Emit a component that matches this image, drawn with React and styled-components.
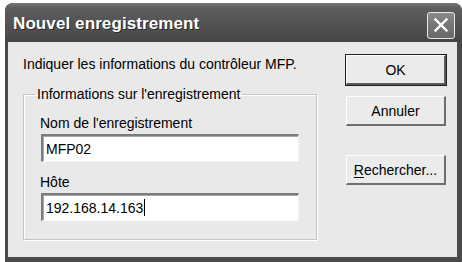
import React from 'react';
import styled, { createGlobalStyle } from 'styled-components';

const GlobalStyle = createGlobalStyle`
  html, body {
    margin: 0;
    padding: 0;
    background: #ffffff;
  }
  body {
    font-family: "Liberation Sans", Arial, sans-serif;
    font-size: 14px;
    color: #000;
  }
`;

const Window = styled.div`
  margin: 3px 0 0 5px;
  width: 457px;
  height: 259px;
  display: flex;
  flex-direction: column;
  background: #4a4a4a;
  border-radius: 8px 8px 0 0;
  overflow: hidden;
`;

const TitleBar = styled.div`
  height: 39px;
  flex-shrink: 0;
  display: flex;
  align-items: center;
  justify-content: space-between;
  padding: 2px 7px 0 8px;
  box-sizing: border-box;
  background: linear-gradient(180deg, #7a7a7a 0%, #5e5e5e 12%, #555555 45%, #4c4c4c 80%, #444444 100%);
`;

const Title = styled.span`
  font-family: "Liberation Sans", Arial, sans-serif;
  font-weight: bold;
  font-size: 17px;
  color: #ffffff;
  text-shadow: 1px 1px 0 #2a2a2a;
  letter-spacing: 0.1px;
`;

const CloseButton = styled.div`
  width: 28px;
  height: 27px;
  box-sizing: border-box;
  border: 1px solid #e8e8e8;
  border-radius: 3px;
  background: linear-gradient(180deg, #8a8a8a 0%, #757575 50%, #6a6a6a 100%);
  display: flex;
  align-items: center;
  justify-content: center;
  margin-top: 3px;
`;

const Body = styled.div`
  flex: 1;
  margin: 0 5px 5px 3px;
  background: #e9e9e9;
  display: flex;
  gap: 29px;
  padding: 13px 11px 0 15px;
`;

const MainColumn = styled.div`
  width: 294px;
  display: flex;
  flex-direction: column;
`;

const Message = styled.div`
  line-height: 16px;
  margin-top: 1px;
`;

const Group = styled.fieldset`
  margin: 14px 0 0 0;
  padding: 13px 16px 18px 17px;
  border: 1px solid #c4c4c4;
  box-shadow: inset 1px 1px 0 #ffffff, 1px 1px 0 #ffffff;
  min-width: 0;
`;

const Legend = styled.legend`
  margin-left: -6px;
  padding: 0 2px;
  line-height: 16px;
`;

const FieldLabel = styled.div`
  line-height: 16px;
  margin-left: -1px;
  margin-top: ${({ $first }) => ($first ? '0' : '12px')};
`;

const TextField = styled.div`
  margin-top: 3px;
  width: 258px;
  height: 28px;
  box-sizing: border-box;
  background: #ffffff;
  border-style: solid;
  border-width: 2px 1px 1px 2px;
  border-color: #7c7c7c #f4f4f4 #f4f4f4 #7c7c7c;
  box-shadow: inset 1px 1px 0 #a8a8a8;
  padding: 0 3px;
  display: flex;
  align-items: center;
  line-height: 16px;
`;

const Caret = styled.span`
  display: inline-block;
  width: 1px;
  height: 17px;
  background: #000;
  margin-left: 1px;
`;

const ButtonColumn = styled.div`
  width: 100px;
  display: flex;
  flex-direction: column;
`;

const Button = styled.div`
  height: 30px;
  box-sizing: border-box;
  display: flex;
  align-items: center;
  justify-content: center;
  background: #ebebeb;
  border-style: solid;
  border-width: 1px 2px 2px 1px;
  border-color: #ffffff #6e6e6e #6e6e6e #ffffff;
  outline: ${({ $default }) => ($default ? '1px solid #1e1e1e' : 'none')};
  outline-offset: 0;
  margin-top: ${({ $gap }) => $gap || 0}px;
  line-height: 16px;
  ${({ $default }) => $default && `
    border-color: #ffffff #5a5a5a #5a5a5a #ffffff;
    box-shadow: 0 0 0 1px #1e1e1e;
    outline: none;
  `}
`;

const Accel = styled.span`
  text-decoration: underline;
  text-underline-offset: 2px;
`;

export default function App() {
  return (
    <>
      <GlobalStyle />
      <Window>
        <TitleBar>
          <Title>Nouvel enregistrement</Title>
          <CloseButton>
            <svg width="16" height="16" viewBox="0 0 16 16">
              <path d="M2.5 2.5 L13.5 13.5 M13.5 2.5 L2.5 13.5" stroke="#ffffff" strokeWidth="2.4" strokeLinecap="square" />
            </svg>
          </CloseButton>
        </TitleBar>
        <Body>
          <MainColumn>
            <Message>Indiquer les informations du contrôleur MFP.</Message>
            <Group>
              <Legend>Informations sur l'enregistrement</Legend>
              <FieldLabel $first>Nom de l'enregistrement</FieldLabel>
              <TextField>MFP02</TextField>
              <FieldLabel>Hôte</FieldLabel>
              <TextField>
                192.168.14.163
                <Caret />
              </TextField>
            </Group>
          </MainColumn>
          <ButtonColumn>
            <Button $default>OK</Button>
            <Button $gap={11}>Annuler</Button>
            <Button $gap={29}>
              <span><Accel>R</Accel>echercher...</span>
            </Button>
          </ButtonColumn>
        </Body>
      </Window>
    </>
  );
}
